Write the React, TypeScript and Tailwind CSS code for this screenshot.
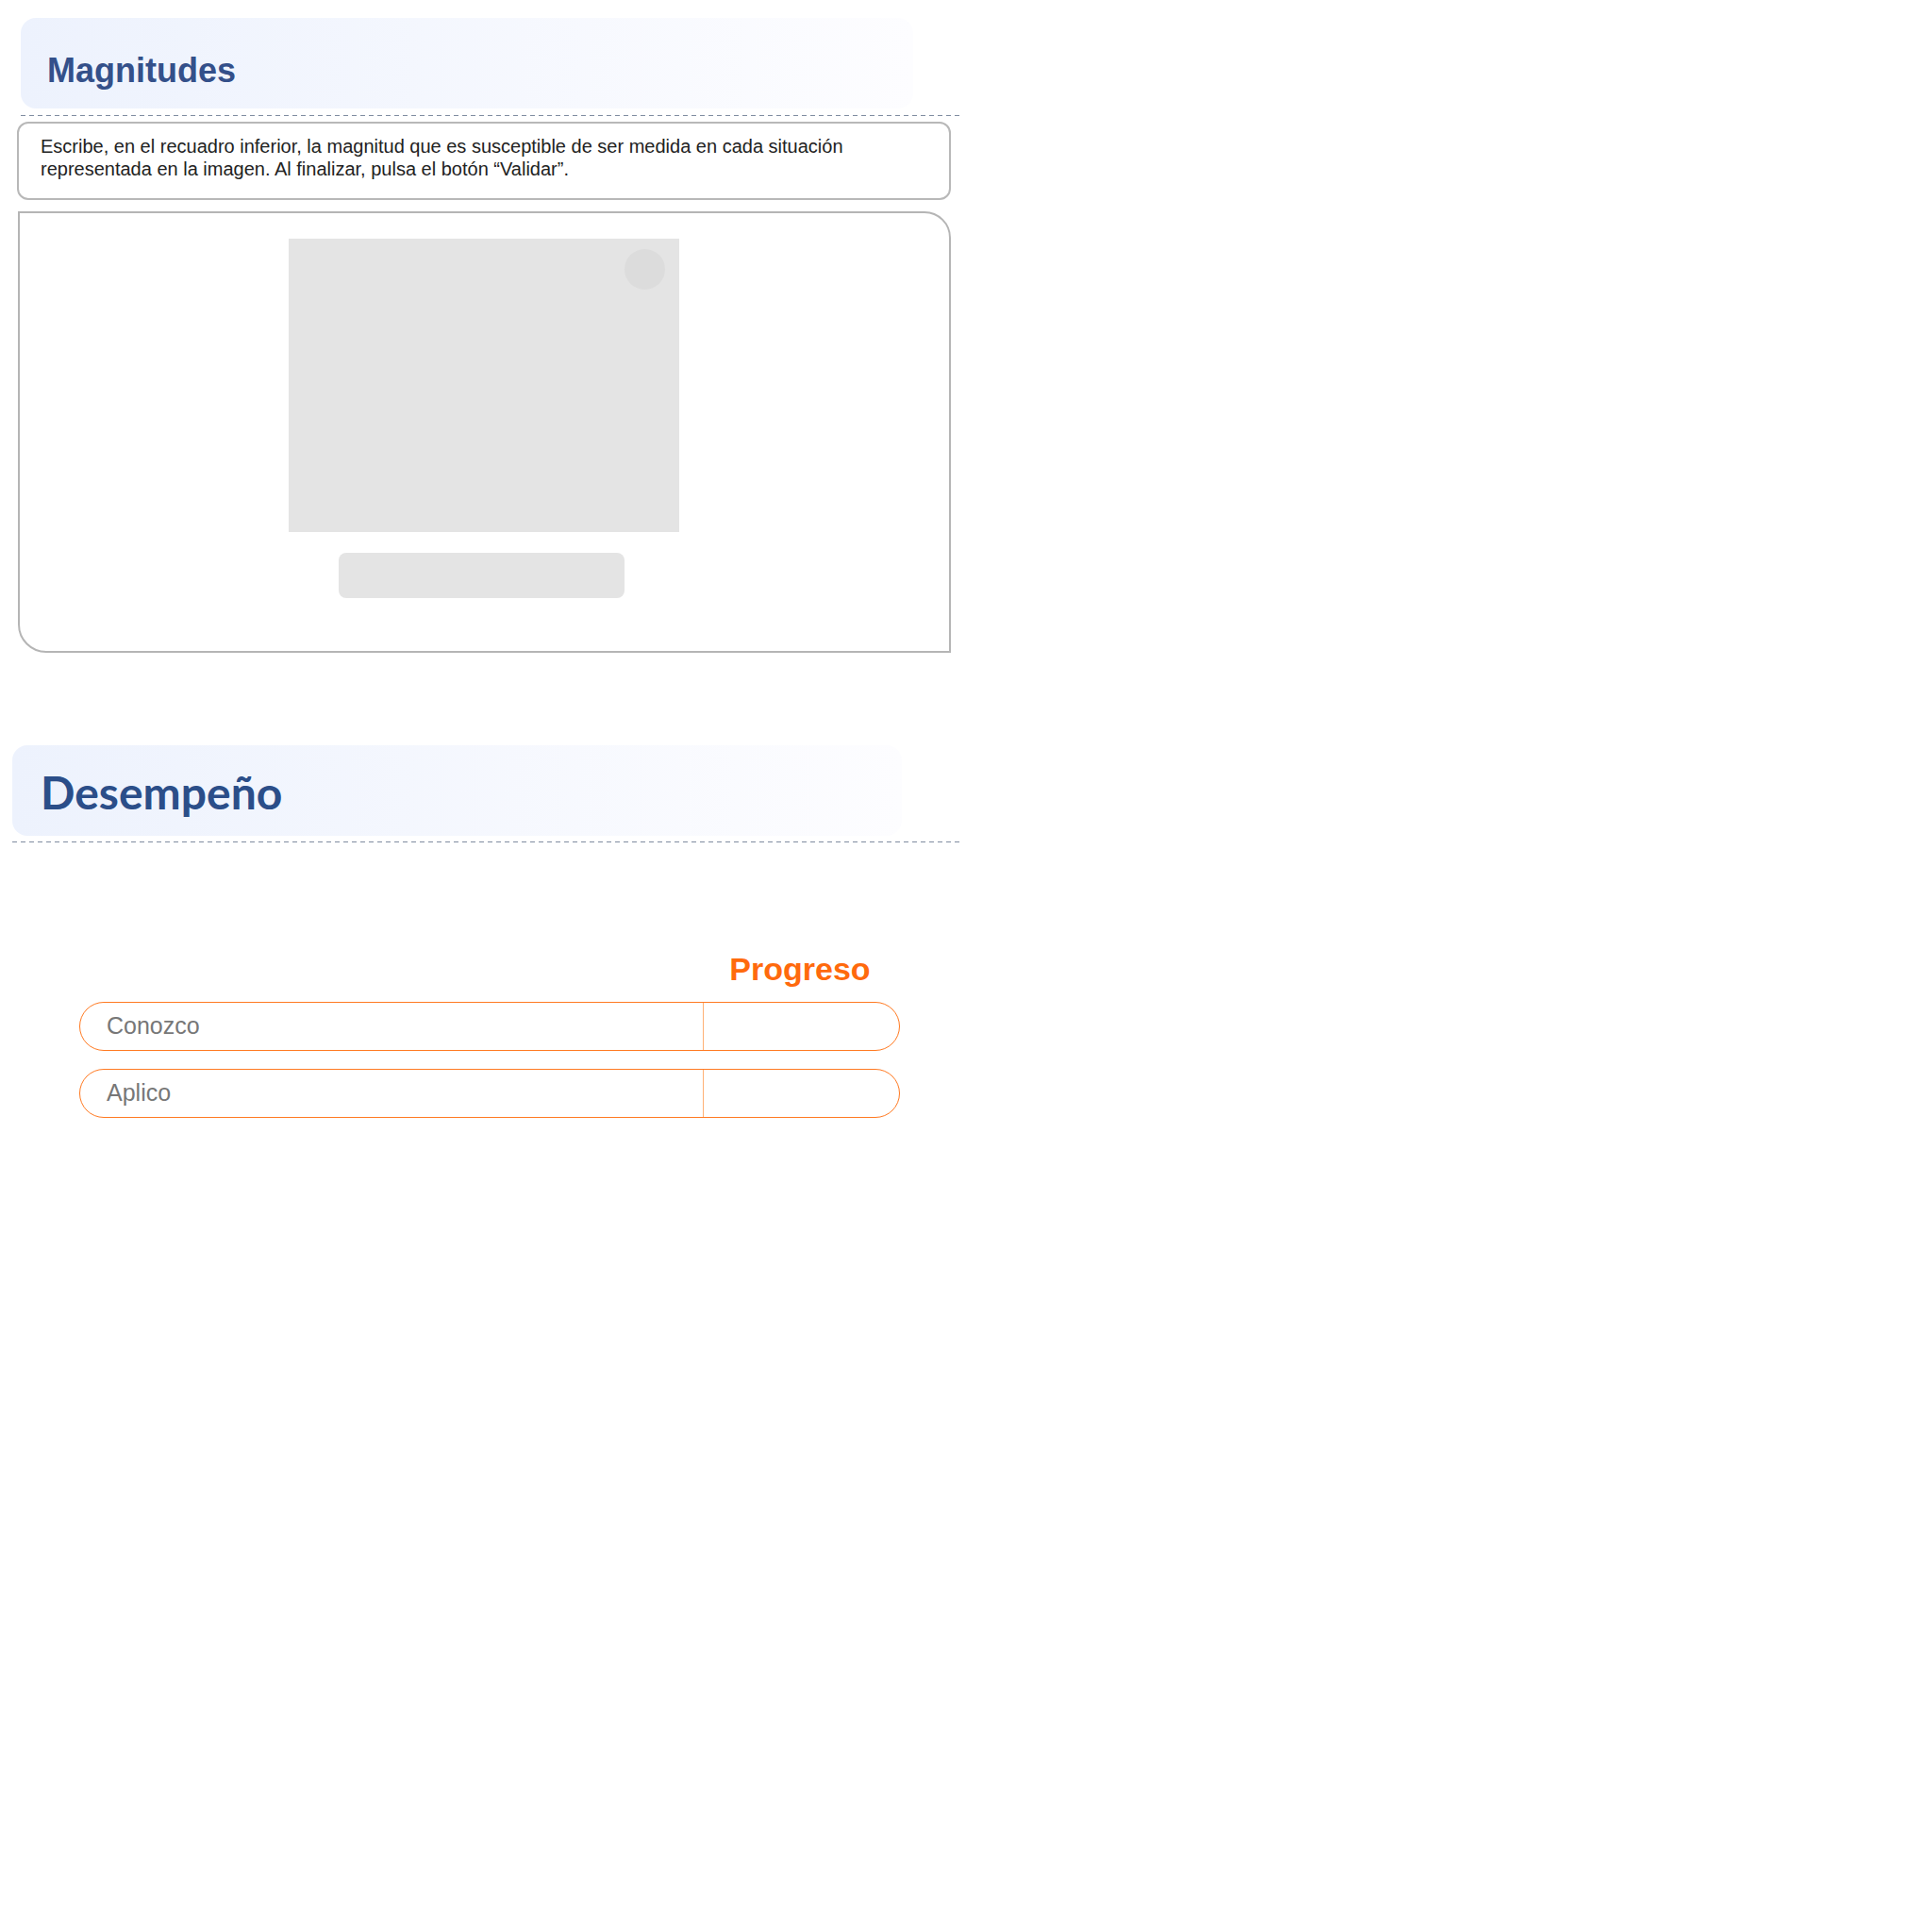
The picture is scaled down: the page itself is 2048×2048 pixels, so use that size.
import React from "react";

const rows = ["Conozco", "Aplico"];

export default function App() {
  return (
    <div className="w-[1040px] bg-white font-['Liberation_Sans',Arial,sans-serif]">
      {/* Magnitudes section */}
      <section className="pt-[19px] pl-[22px]">
        <div className="w-[946px] h-[96px] rounded-[16px] bg-gradient-to-r from-[#edf2fd] to-[#fdfdff] pl-[28px] pt-[36px]">
          <h1 className="text-[36px] leading-[40px] font-bold text-[#34508a]">Magnitudes</h1>
        </div>
        <div className="mt-[7px] w-[998px] h-px bg-[repeating-linear-gradient(to_right,#7f8ca0_0_5px,transparent_5px_9px)]"></div>
      </section>

      {/* Instructions */}
      <div className="ml-[18px] mt-[6px] w-[990px] h-[83px] border-2 border-[#b8b8b8] rounded-[12px] pl-[23px] pr-[80px] pt-[12px]">
        <p className="text-[20px] leading-[24px] text-[#222]">
          Escribe, en el recuadro inferior, la magnitud que es susceptible de ser medida en cada situación representada en la imagen. Al finalizar, pulsa el botón “Validar”.
        </p>
      </div>

      {/* Activity */}
      <div className="ml-[19px] mt-[12px] w-[989px] h-[468px] border-2 border-[#b5b5b5] rounded-tr-[28px] rounded-bl-[30px] flex flex-col items-center pt-[27px]">
        <div className="relative mr-[2px] w-[414px] h-[311px] bg-[#e4e4e4]">
          <div className="absolute top-[11px] right-[15px] w-[43px] h-[43px] rounded-full bg-[#dcdcdc]"></div>
        </div>
        <div className="mt-[22px] mr-[6px] w-[303px] h-[48px] rounded-[8px] bg-[#e4e4e4]"></div>
      </div>

      {/* Desempeño section */}
      <section className="mt-[98px] ml-[13px]">
        <div className="w-[943px] h-[96px] rounded-[16px] bg-gradient-to-r from-[#edf2fd] to-[#fdfdff] pl-[30px] pt-[21px]">
          <h2 className="font-['Lato',sans-serif] text-[48px] leading-[58px] font-bold text-[#2b4e89]">Desempeño</h2>
        </div>
        <div className="mt-[6px] w-[1004px] h-px bg-[repeating-linear-gradient(to_right,#7f8ca0_0_5px,transparent_5px_9px)]"></div>
      </section>

      {/* Progress table */}
      <div className="ml-[84px] w-[870px] mt-[115px]">
        <div className="flex">
          <div className="w-[661px]"></div>
          <div className="flex-1 pr-[3px] text-center text-[34px] leading-[39px] font-bold text-[#ff6a0d]">Progreso</div>
        </div>
        <div className="mt-[15px] flex flex-col gap-[19px]">
          {rows.map((label) => (
            <div key={label} className="flex h-[52px] rounded-full border-[1.5px] border-[#ff7a22]">
              <div className="w-[660px] flex items-center pl-[28px] text-[25px] text-[#777]">{label}</div>
              <div className="flex-1 border-l-[1.5px] border-[#ffb074]"></div>
            </div>
          ))}
        </div>
      </div>
    </div>
  );
}
